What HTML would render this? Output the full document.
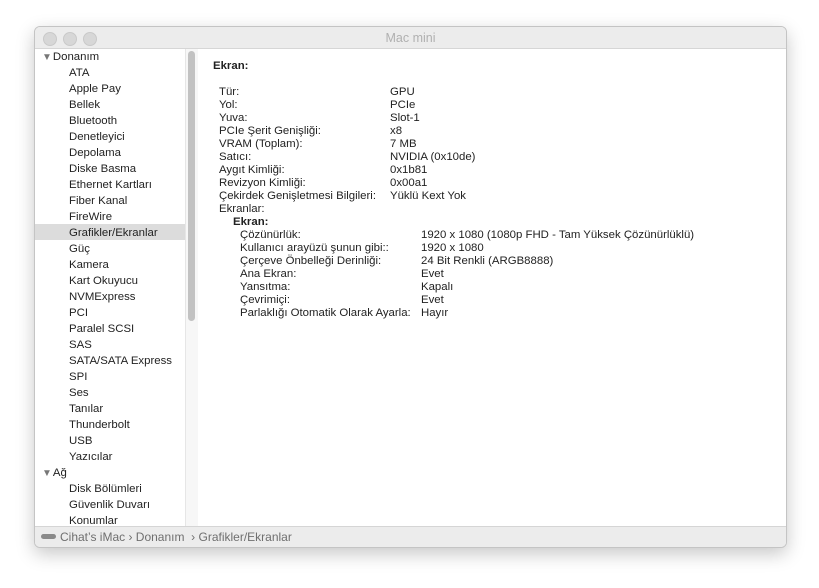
<!DOCTYPE html>
<html><head><meta charset="utf-8"><style>
body{margin:0;width:819px;height:588px;background:#fff;font-family:"Liberation Sans",sans-serif;font-size:11.4px;color:#222;position:relative;overflow:hidden}
.win{position:absolute;left:34px;top:26px;width:751px;height:520px;border:1px solid #c4c4c4;border-radius:6px;box-shadow:0 6px 18px rgba(0,0,0,.22);background:#fff;overflow:hidden}
.title{position:absolute;left:0;top:0;width:751px;height:21px;background:#ececec;border-bottom:1px solid #d6d6d6;text-align:center;line-height:22px;font-size:12.5px;color:#b0b0b0}
.dot{position:absolute;top:5px;width:12px;height:12px;border-radius:50%;background:#d7d7d7;border:0.5px solid #c9c9c9}
.side{position:absolute;left:0;top:22px;width:162px;height:477px;background:#fff;border-right:1px solid #d9d9d9}
.sb{position:absolute;left:150px;top:0;width:12px;height:477px;background:#f7f7f7;border-left:1px solid #e6e6e6}
.thumb{position:absolute;left:2px;top:2px;width:7px;height:270px;border-radius:4px;background:#c2c2c2}
.it{position:absolute;left:34px;height:16px;line-height:16px;white-space:nowrap}
.sel{position:absolute;left:0;width:150px;height:16px;background:#dcdcdc;top:175px}
.st{position:absolute;left:0;top:499px;width:751px;height:21px;background:#ececec;border-top:1px solid #d5d5d5;line-height:20px;color:#6f6f6f;font-size:12px}
.r{position:absolute;white-space:nowrap;line-height:13px}
.tri{color:#777;font-size:10px;margin-right:1px}
</style></head><body>
<div class="win">
<div class="title">Mac mini</div>
<div class="dot" style="left:8px"></div><div class="dot" style="left:28px"></div><div class="dot" style="left:48px"></div>
<div class="side">
<div class="sel"></div>
<div class="it" style="left:7px;top:0"><span class="tri">▼</span>Donanım</div>
<div class="it" style="top:16px">ATA</div>
<div class="it" style="top:32px">Apple Pay</div>
<div class="it" style="top:48px">Bellek</div>
<div class="it" style="top:64px">Bluetooth</div>
<div class="it" style="top:80px">Denetleyici</div>
<div class="it" style="top:96px">Depolama</div>
<div class="it" style="top:112px">Diske Basma</div>
<div class="it" style="top:128px">Ethernet Kartları</div>
<div class="it" style="top:144px">Fiber Kanal</div>
<div class="it" style="top:160px">FireWire</div>
<div class="it" style="top:176px">Grafikler/Ekranlar</div>
<div class="it" style="top:192px">Güç</div>
<div class="it" style="top:208px">Kamera</div>
<div class="it" style="top:224px">Kart Okuyucu</div>
<div class="it" style="top:240px">NVMExpress</div>
<div class="it" style="top:256px">PCI</div>
<div class="it" style="top:272px">Paralel SCSI</div>
<div class="it" style="top:288px">SAS</div>
<div class="it" style="top:304px">SATA/SATA Express</div>
<div class="it" style="top:320px">SPI</div>
<div class="it" style="top:336px">Ses</div>
<div class="it" style="top:352px">Tanılar</div>
<div class="it" style="top:368px">Thunderbolt</div>
<div class="it" style="top:384px">USB</div>
<div class="it" style="top:400px">Yazıcılar</div>
<div class="it" style="left:7px;top:416px"><span class="tri">▼</span>Ağ</div>
<div class="it" style="top:432px">Disk Bölümleri</div>
<div class="it" style="top:448px">Güvenlik Duvarı</div>
<div class="it" style="top:464px">Konumlar</div>
<div class="sb"><div class="thumb"></div></div>
</div>
<div class="r" style="left:178px;top:33px;font-weight:bold">Ekran:</div>
<div class="r" style="left:184px;top:59px">Tür:<br>Yol:<br>Yuva:<br>PCIe Şerit Genişliği:<br>VRAM (Toplam):<br>Satıcı:<br>Aygıt Kimliği:<br>Revizyon Kimliği:<br>Çekirdek Genişletmesi Bilgileri:<br>Ekranlar:</div>
<div class="r" style="left:355px;top:59px">GPU<br>PCIe<br>Slot-1<br>x8<br>7 MB<br>NVIDIA (0x10de)<br>0x1b81<br>0x00a1<br>Yüklü Kext Yok</div>
<div class="r" style="left:198px;top:189px;font-weight:bold">Ekran:</div>
<div class="r" style="left:205px;top:202px">Çözünürlük:<br>Kullanıcı arayüzü şunun gibi::<br>Çerçeve Önbelleği Derinliği:<br>Ana Ekran:<br>Yansıtma:<br>Çevrimiçi:<br>Parlaklığı Otomatik Olarak Ayarla:</div>
<div class="r" style="left:386px;top:202px">1920 x 1080 (1080p FHD - Tam Yüksek Çözünürlüklü)<br>1920 x 1080<br>24 Bit Renkli (ARGB8888)<br>Evet<br>Kapalı<br>Evet<br>Hayır</div>
<div class="st"><span style="display:inline-block;width:15px;height:5px;background:#8a8a8a;border-radius:3px;margin:0 4px 2px 6px;vertical-align:middle"></span>Cihat’s iMac › Donanım &nbsp;› Grafikler/Ekranlar</div>
</div>
</body></html>
